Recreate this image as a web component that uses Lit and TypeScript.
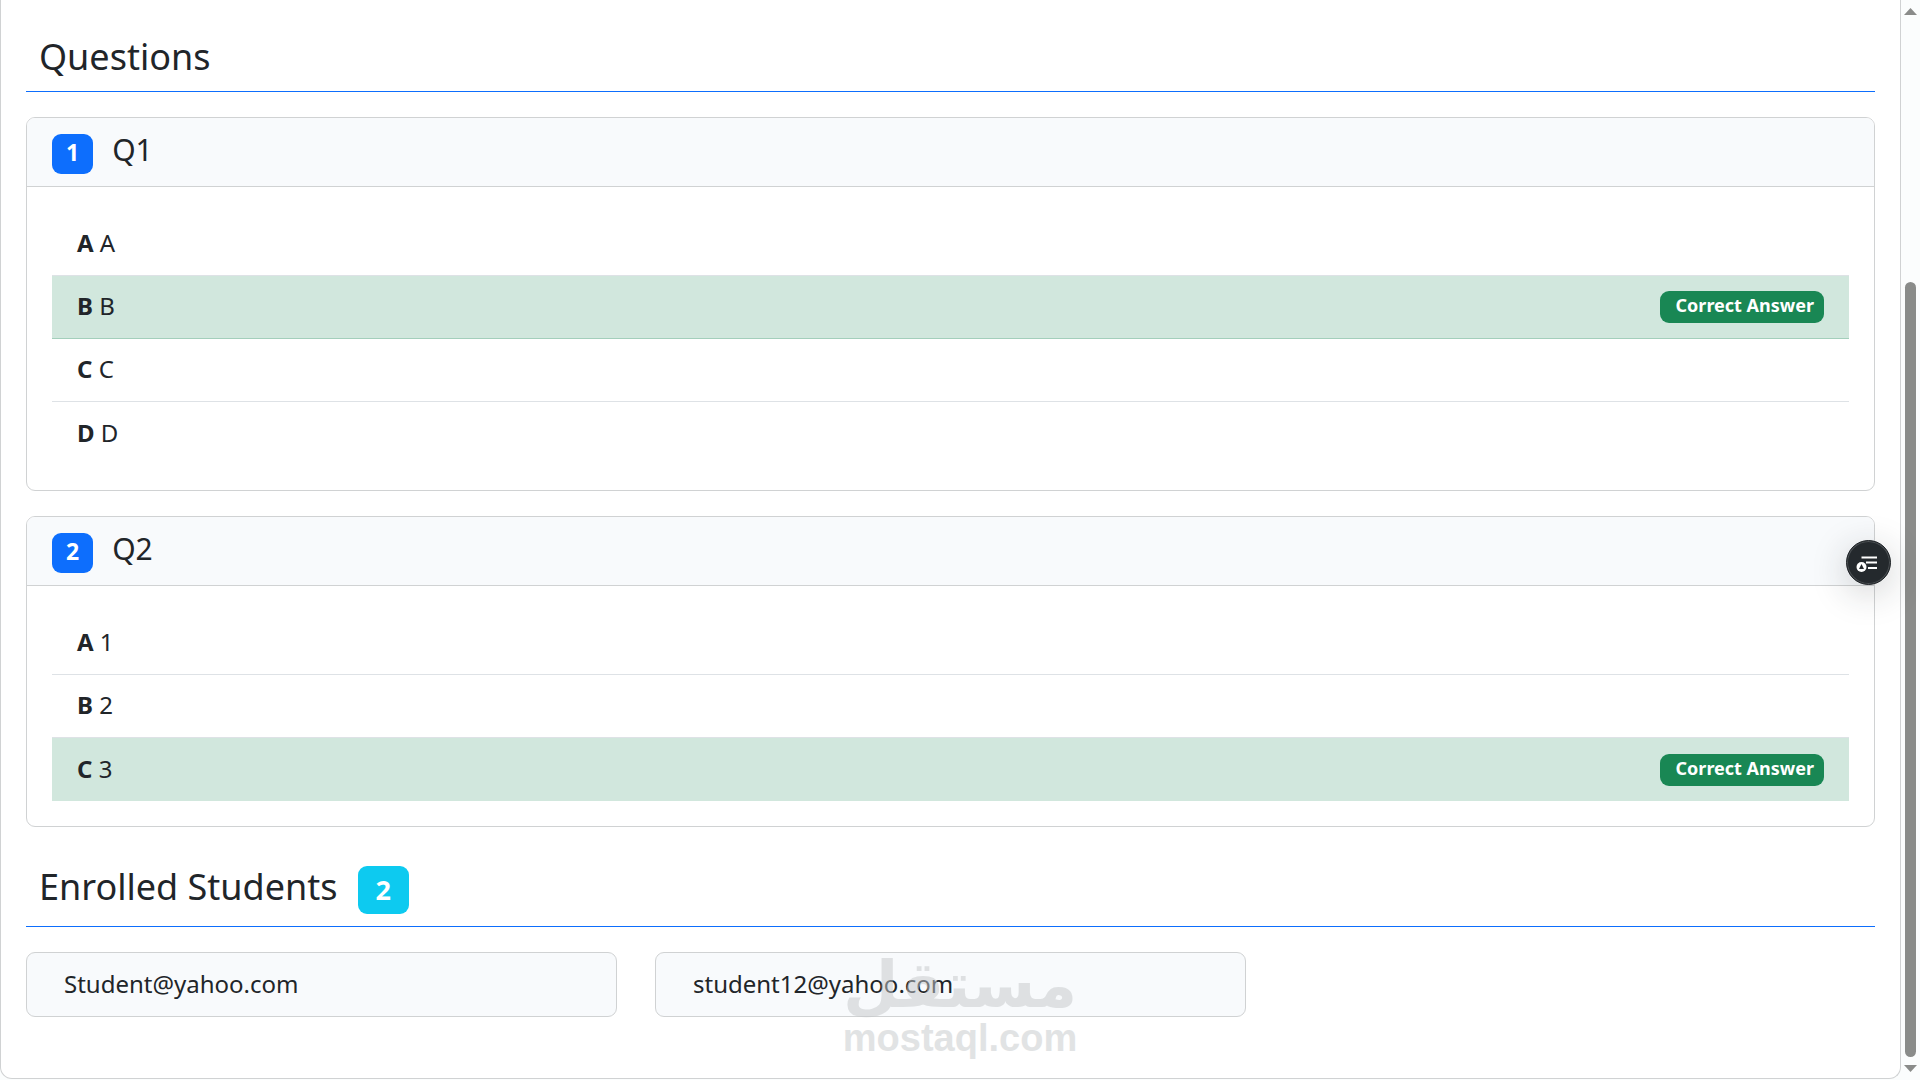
import { LitElement, html, css, nothing } from 'lit';
import { customElement, property } from 'lit/decorators.js';

interface Option {
  letter: string;
  text: string;
  correct?: boolean;
}

interface Question {
  title: string;
  options: Option[];
}

const QUESTIONS: Question[] = [
  {
    title: 'Q1',
    options: [
      { letter: 'A', text: 'A' },
      { letter: 'B', text: 'B', correct: true },
      { letter: 'C', text: 'C' },
      { letter: 'D', text: 'D' },
    ],
  },
  {
    title: 'Q2',
    options: [
      { letter: 'A', text: '1' },
      { letter: 'B', text: '2' },
      { letter: 'C', text: '3', correct: true },
    ],
  },
];

const STUDENTS = ['Student@yahoo.com', 'student12@yahoo.com'];

@customElement('question-card')
class QuestionCard extends LitElement {
  @property({ type: Number }) number = 1;
  @property({ attribute: false }) question!: Question;

  static styles = css`
    :host {
      display: block;
    }
    .card {
      border: 1px solid #d0d2d3;
      border-radius: 9px;
      overflow: hidden;
      background: #fff;
    }
    .header {
      display: flex;
      align-items: baseline;
      gap: 19px;
      padding: 12px 25px;
      height: 44px;
      background: #f8fafc;
      border-bottom: 1px solid #d0d2d3;
    }
    .number {
      padding: 6px 14px 10px;
      border-radius: 9px;
      background: #0d6efd;
      color: #fff;
      font-size: 23px;
      font-weight: 700;
      line-height: 24px;
      margin-top: 4px;
    }
    .title {
      margin: 0;
      font-size: 30px;
      font-weight: 400;
      line-height: 36px;
    }
    .options {
      list-style: none;
      margin: 0;
      padding: 26px 25px 25px;
    }
    .option {
      display: flex;
      align-items: center;
      justify-content: space-between;
      box-sizing: border-box;
      min-height: 63px;
      padding: 0 25px;
      border-bottom: 1px solid #dee2e6;
      font-size: 24px;
      line-height: 36px;
    }
    .label {
      padding-bottom: 2px;
    }
    .option.correct {
      background: #d1e7dd;
      border-bottom-color: #a3cfbb;
    }
    .option:last-child {
      border-bottom: none;
    }
    .answer {
      padding: 2px 10px 6px 16px;
      border-radius: 9px;
      background: #198754;
      color: #fff;
      font-size: 18px;
      font-weight: 700;
      line-height: 24px;
    }
  `;

  render() {
    return html`
      <article class="card">
        <header class="header">
          <span class="number">${this.number}</span>
          <h3 class="title">${this.question.title}</h3>
        </header>
        <ul class="options">
          ${this.question.options.map(
            (o) => html`
              <li class="option ${o.correct ? 'correct' : ''}">
                <span class="label"><strong>${o.letter}</strong> ${o.text}</span>
                ${o.correct ? html`<span class="answer">Correct Answer</span>` : nothing}
              </li>
            `,
          )}
        </ul>
      </article>
    `;
  }
}

@customElement('app-root')
class AppRoot extends LitElement {
  static styles = css`
    :host {
      display: flex;
      position: relative;
      box-sizing: border-box;
      min-height: 100vh;
      background: #fbfdfd;
      color: #212529;
      font-family: 'Noto Sans', 'Open Sans', sans-serif;
      font-size: 24px;
    }
    .page {
      flex: 1;
      min-width: 0;
      box-sizing: border-box;
      margin-bottom: 1px;
      padding: 33px 25px 61px;
      border: 1px solid #d0d2d3;
      border-top: none;
      border-radius: 0 0 12px 12px;
      background: #fff;
    }
    .heading {
      display: flex;
      align-items: baseline;
      gap: 20px;
      margin: 0 0 25px;
      padding: 0 13px 10px;
      border-bottom: 1px solid #0d6efd;
      font-size: 36px;
      font-weight: 400;
      line-height: 48px;
    }
    .heading.students-heading {
      margin-top: 36px;
      padding-bottom: 12px;
    }
    .count {
      padding: 10px 18px;
      border-radius: 9px;
      background: #0dcaf0;
      color: #fff;
      font-size: 27px;
      font-weight: 700;
      line-height: 28px;
    }
    .questions {
      display: flex;
      flex-direction: column;
      gap: 25px;
    }
    .students {
      display: grid;
      grid-template-columns: repeat(3, 1fr);
      gap: 38px;
      list-style: none;
      margin: 0;
      padding: 0;
    }
    .student {
      padding: 12px 37px 14px;
      border: 1px solid #d0d2d3;
      border-radius: 9px;
      background: #f8fafc;
      line-height: 37px;
      overflow-wrap: anywhere;
    }
    .scrollbar {
      display: flex;
      flex-direction: column;
      align-items: center;
      justify-content: space-between;
      box-sizing: border-box;
      width: 19px;
      padding: 8px 0;
    }
    .arrow {
      display: block;
      width: 13px;
      height: 7px;
      fill: #8a8c8a;
    }
    .track {
      flex: 1;
      display: flex;
      flex-direction: column;
      justify-content: flex-end;
      padding: 8px 0;
    }
    .thumb {
      width: 11px;
      height: 75%;
      border-radius: 6px;
      background: #8a8c8a;
    }
    .tool {
      position: absolute;
      right: 29px;
      top: 540px;
      width: 45px;
      height: 45px;
      padding: 0;
      border: 1px solid #212529;
      border-radius: 50%;
      background: #24292d;
      box-shadow:
        inset 0 0 0 1px #4c5154,
        0 8px 36px rgba(33, 37, 41, 0.22);
    }
    .tool svg {
      display: block;
      width: 43px;
      height: 43px;
    }
    .watermark {
      position: absolute;
      left: 0;
      right: 0;
      bottom: 23px;
      display: flex;
      flex-direction: column;
      align-items: center;
      color: #c5c8ca;
      opacity: 0.5;
      font-weight: 700;
      pointer-events: none;
    }
    .mark-arabic {
      font-family: 'DejaVu Sans', sans-serif;
      font-size: 64px;
      line-height: 68px;
    }
    .mark-latin {
      font-family: 'Liberation Sans', sans-serif;
      font-size: 38px;
      line-height: 38px;
    }
  `;

  render() {
    return html`
      <main class="page">
        <h2 class="heading">Questions</h2>
        <section class="questions">
          ${QUESTIONS.map(
            (q, i) => html`<question-card .number=${i + 1} .question=${q}></question-card>`,
          )}
        </section>
        <h2 class="heading students-heading">
          <span>Enrolled Students</span><span class="count">${STUDENTS.length}</span>
        </h2>
        <ul class="students">
          ${STUDENTS.map((s) => html`<li class="student">${s}</li>`)}
        </ul>
      </main>
      <div class="scrollbar" aria-hidden="true">
        <svg class="arrow" viewBox="0 0 13 7"><path d="M6.5 0 13 7H0Z" /></svg>
        <div class="track"><div class="thumb"></div></div>
        <svg class="arrow" viewBox="0 0 13 7"><path d="M0 0H13L6.5 7Z" /></svg>
      </div>
      <div class="watermark">
        <span class="mark-arabic" lang="ar" dir="rtl">مستقل</span>
        <span class="mark-latin">mostaql.com</span>
      </div>
      <button class="tool" type="button" aria-label="Reading tools">
        <svg viewBox="0 0 43 43" aria-hidden="true">
          <path d="M14.5 16.5H30M19 21.5H30M21 27H30" stroke="#fff" stroke-width="2" fill="none" />
          <circle cx="14.5" cy="26" r="5" fill="#fff" />
          <path d="M14.5 23 17 28H12Z" fill="#24292d" />
        </svg>
      </button>
    `;
  }
}
